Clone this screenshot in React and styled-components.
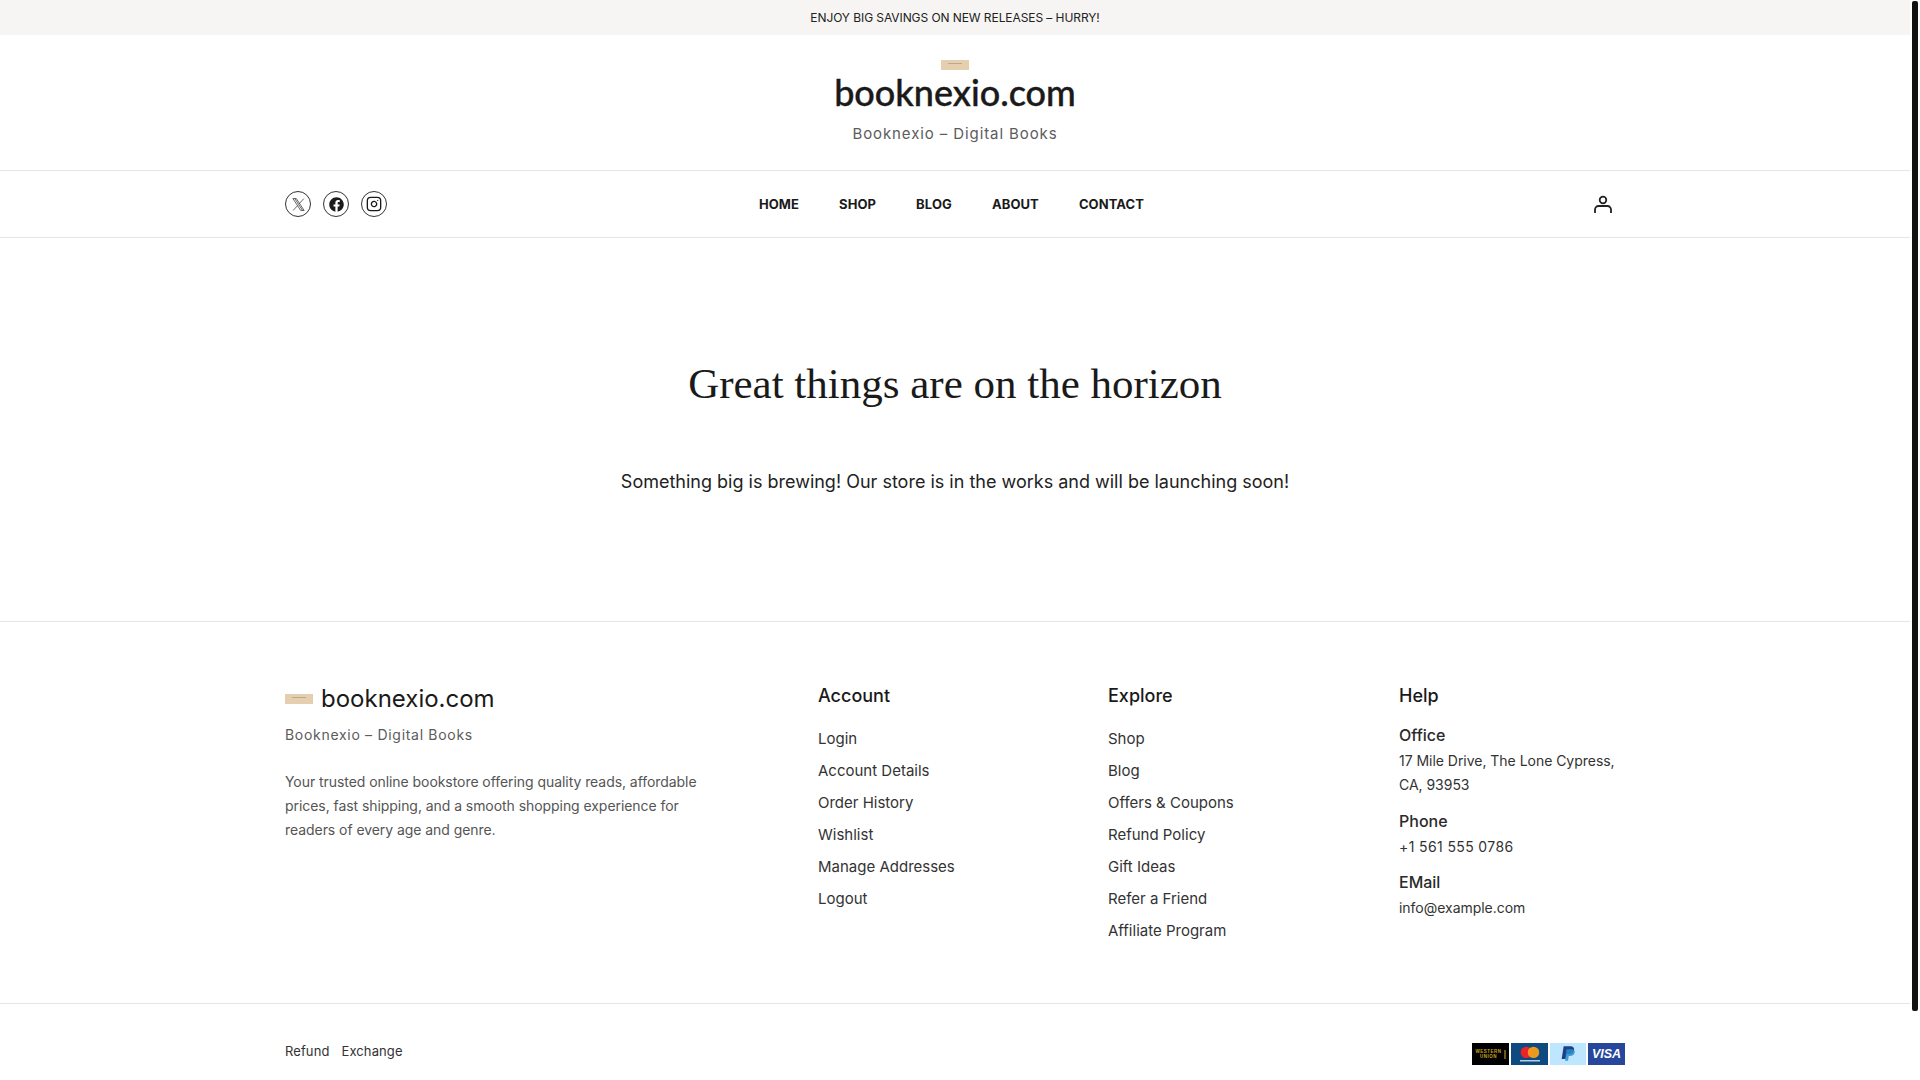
import React from 'react'
import styled, { createGlobalStyle } from 'styled-components'
import { FaFacebook } from 'react-icons/fa'
import { FiInstagram } from 'react-icons/fi'

const accountLinks = ['Login', 'Account Details', 'Order History', 'Wishlist', 'Manage Addresses', 'Logout']
const exploreLinks = ['Shop', 'Blog', 'Offers & Coupons', 'Refund Policy', 'Gift Ideas', 'Refer a Friend', 'Affiliate Program']
const navLinks = ['Home', 'Shop', 'Blog', 'About', 'Contact']

const App = () => {
    return (
        <>
            <GlobalStyle />
            <ScrollThumb />
            <Page>
                <TopBar>ENJOY BIG SAVINGS ON NEW RELEASES – HURRY!</TopBar>
                <Brand>
                    <LogoImage />
                    <BrandName>booknexio.com</BrandName>
                    <Tagline>Booknexio – Digital Books</Tagline>
                </Brand>
                <NavBar>
                    <NavInner>
                        <Socials>
                            <SocialIcon>
                                <svg width="15" height="15" viewBox="0 0 24 24" fill="none" stroke="#222" strokeWidth="1.1">
                                    <path d="M3 2.500h5.500l12.500 19h-5.500z" />
                                    <path d="M6 2.500l12.500 19" />
                                    <path d="M20.500 2.500 13.200 10.800M10.600 13.800 3.300 21.500" />
                                </svg>
                            </SocialIcon>
                            <SocialIcon><FaFacebook size={15} color="#1a1a1a" /></SocialIcon>
                            <SocialIcon><FiInstagram size={16} color="#1a1a1a" /></SocialIcon>
                        </Socials>
                        <Nav>
                            {navLinks.map(link => <NavLink key={link}>{link}</NavLink>)}
                        </Nav>
                        <UserButton>
                            <svg width="20" height="20" viewBox="0 0 20 20" fill="none" stroke="#222" strokeWidth="1.8">
                                <circle cx="10" cy="6" r="3.300" />
                                <path d="M2 19v-3.500a3.500 3.500 0 0 1 3.500-3.500h9a3.500 3.500 0 0 1 3.500 3.500V19" />
                            </svg>
                        </UserButton>
                    </NavInner>
                </NavBar>
                <Main>
                    <Heading>Great things are on the horizon</Heading>
                    <Lead>Something big is brewing! Our store is in the works and will be launching soon!</Lead>
                </Main>
                <Footer>
                    <FooterInner>
                        <About>
                            <FooterBrand>
                                <LogoImage />
                                <FooterName>booknexio.com</FooterName>
                            </FooterBrand>
                            <FooterTagline>Booknexio – Digital Books</FooterTagline>
                            <AboutText>Your trusted online bookstore offering quality reads, affordable prices, fast shipping, and a smooth shopping experience for readers of every age and genre.</AboutText>
                        </About>
                        <div>
                            <ColumnTitle>Account</ColumnTitle>
                            <LinkList>
                                {accountLinks.map(link => <FooterLink key={link}>{link}</FooterLink>)}
                            </LinkList>
                        </div>
                        <div>
                            <ColumnTitle>Explore</ColumnTitle>
                            <LinkList>
                                {exploreLinks.map(link => <FooterLink key={link}>{link}</FooterLink>)}
                            </LinkList>
                        </div>
                        <div>
                            <ColumnTitle $gap={11}>Help</ColumnTitle>
                            <HelpGroup>
                                <HelpLabel>Office</HelpLabel>
                                <HelpText>17 Mile Drive, The Lone Cypress,<br />CA, 93953</HelpText>
                            </HelpGroup>
                            <HelpGroup $gap={10}>
                                <HelpLabel>Phone</HelpLabel>
                                <PhoneText>+1 561 555 0786</PhoneText>
                            </HelpGroup>
                            <HelpGroup>
                                <HelpLabel>EMail</HelpLabel>
                                <HelpText>info@example.com</HelpText>
                            </HelpGroup>
                        </div>
                    </FooterInner>
                </Footer>
                <BottomBar>
                    <BottomInner>
                        <BottomLinks>
                            <BottomLink>Refund</BottomLink>
                            <BottomLink>Exchange</BottomLink>
                        </BottomLinks>
                        <Payments>
                            <PayCard $bg="#000">
                                <UnionText>WESTERN<br />UNION</UnionText>
                                <UnionBar />
                            </PayCard>
                            <PayCard $bg="#0d4a80">
                                <svg width="37" height="22" viewBox="0 0 37 22">
                                    <circle cx="15.400" cy="9.400" r="5.700" fill="#e8232a" />
                                    <circle cx="22.500" cy="9.400" r="5.700" fill="#f79e1b" fillOpacity="0.95" />
                                    <rect x="9" y="17" width="20" height="1.500" fill="#b9cde0" />
                                </svg>
                            </PayCard>
                            <PayCard $bg="#bfe6ff" $width={36}>
                                <svg width="36" height="22" viewBox="0 0 37 22">
                                    <path d="M14 3h7c3 0 4.200 1.800 3.600 4.200-.6 2.800-2.600 4-5.200 4h-2.400l-1 5h-4z" fill="#1f3f86" />
                                    <path d="M17 6h6c2 .4 2.800 1.800 2.300 3.600-.6 2.400-2.400 3.400-4.600 3.400h-1.400l-.8 5h-3z" fill="#2a8fcb" fillOpacity="0.85" />
                                </svg>
                            </PayCard>
                            <PayCard $bg="#26479b">
                                <VisaText>VISA</VisaText>
                            </PayCard>
                        </Payments>
                    </BottomInner>
                </BottomBar>
            </Page>
        </>
    )
}

export default App

const GlobalStyle = createGlobalStyle`
    body{
        margin:0;
        background:#fff;
        color:#1a1a1a;
        font-family:Inter, "Liberation Sans", sans-serif;
    }
`

const ScrollThumb = styled.div`
    position:fixed;
    top:1px;
    left:1912px;
    width:6px;
    height:1010px;
    background:#111;
    border-radius:2px;
`

const Page = styled.div`
    width:1910px;
`

const TopBar = styled.div`
    height:35px;
    background:#f6f5f3;
    display:flex;
    align-items:center;
    justify-content:center;
    font-size:12px;
    letter-spacing:-0.08px;
    color:#222;
`

const Brand = styled.div`
    height:135px;
    box-sizing:border-box;
    padding-top:25px;
    display:flex;
    flex-direction:column;
    align-items:center;
`

const LogoImage = styled.div`
    width:28px;
    height:10px;
    flex-shrink:0;
    background:#e6cfae;
    display:flex;
    justify-content:center;
    padding-top:3px;
    box-sizing:border-box;
    &::after{
        content:'';
        width:14px;
        height:1px;
        background:#b8a98f;
    }
`

const BrandName = styled.div`
    font-family:Lato, sans-serif;
    font-weight:500;
    font-size:36px;
    line-height:44px;
    -webkit-text-stroke:0.4px #1a1a1a;
    color:#1a1a1a;
`

const Tagline = styled.div`
    font-size:15px;
    letter-spacing:0.9px;
    line-height:22px;
    margin-top:9px;
    color:#5c5c5c;
`

const NavBar = styled.div`
    border-top:1px solid #e6e6e6;
    border-bottom:1px solid #e6e6e6;
    height:66px;
`

const NavInner = styled.div`
    width:1340px;
    height:100%;
    margin:0 auto;
    display:grid;
    grid-template-columns:1fr auto 1fr;
    align-items:center;
`

const Socials = styled.div`
    display:flex;
    gap:12px;
`

const SocialIcon = styled.div`
    width:24px;
    height:24px;
    border:1px solid #333;
    border-radius:50%;
    display:flex;
    align-items:center;
    justify-content:center;
`

const Nav = styled.nav`
    display:flex;
    gap:40px;
    padding-right:7px;
`

const NavLink = styled.a`
    font-size:13px;
    font-weight:700;
    letter-spacing:0.1px;
    text-transform:uppercase;
    color:#1a1a1a;
`

const UserButton = styled.div`
    display:flex;
    justify-content:flex-end;
    padding-right:12px;
`

const Main = styled.main`
    height:383px;
    box-sizing:border-box;
    padding-top:120px;
    text-align:center;
`

const Heading = styled.h1`
    margin:0;
    font-family:"Liberation Serif", serif;
    font-weight:400;
    font-size:43px;
    line-height:52px;
    color:#1a1a1a;
`

const Lead = styled.p`
    margin:58px 0 0;
    font-size:18px;
    line-height:28px;
    color:#222;
`

const Footer = styled.footer`
    border-top:1px solid #e6e6e6;
    height:382px;
    box-sizing:border-box;
    padding-top:59px;
`

const FooterInner = styled.div`
    width:1340px;
    margin:0 auto;
    display:grid;
    grid-template-columns:533px 290px 291px 226px;
`

const About = styled.div`
    padding-top:1px;
`

const FooterBrand = styled.div`
    display:flex;
    align-items:center;
    gap:8px;
`

const FooterName = styled.div`
    font-size:24px;
    line-height:34px;
    color:#1a1a1a;
`

const FooterTagline = styled.div`
    font-size:14px;
    letter-spacing:0.7px;
    line-height:22px;
    margin-top:8px;
    color:#5c5c5c;
`

const AboutText = styled.p`
    margin:24px 0 0;
    width:430px;
    font-size:14px;
    letter-spacing:-0.06px;
    line-height:24px;
    color:#555;
`

const ColumnTitle = styled.h4`
    margin:0 0 ${props => props.$gap || 16}px;
    font-size:18px;
    font-weight:500;
    line-height:30px;
    color:#1a1a1a;
`

const LinkList = styled.div`
    display:flex;
    flex-direction:column;
    gap:8px;
`

const FooterLink = styled.a`
    font-size:15px;
    line-height:24px;
    color:#333;
`

const HelpGroup = styled.div`
    margin-bottom:${props => props.$gap || 11}px;
`

const HelpLabel = styled.div`
    font-size:16px;
    font-weight:500;
    line-height:27px;
    color:#2a2a2a;
`

const HelpText = styled.div`
    font-size:14px;
    letter-spacing:-0.03px;
    line-height:24px;
    color:#333;
`

const PhoneText = styled(HelpText)`
    letter-spacing:0.38px;
`

const BottomBar = styled.div`
    border-top:1px solid #e6e6e6;
    height:146px;
`

const BottomInner = styled.div`
    width:1340px;
    margin:0 auto;
    padding-top:37px;
    display:flex;
    justify-content:space-between;
    align-items:flex-start;
`

const BottomLinks = styled.div`
    display:flex;
    gap:12px;
`

const BottomLink = styled.a`
    font-size:13px;
    letter-spacing:0.1px;
    line-height:20px;
    color:#333;
`

const Payments = styled.div`
    display:flex;
    gap:2px;
    margin-top:2px;
`

const PayCard = styled.div`
    width:${props => props.$width || 37}px;
    height:22px;
    background:${props => props.$bg};
    display:flex;
    align-items:center;
    justify-content:center;
    gap:2px;
`

const UnionText = styled.span`
    font-family:"Liberation Sans", sans-serif;
    font-size:4.5px;
    font-weight:700;
    line-height:5px;
    letter-spacing:0.5px;
    text-align:center;
    color:#c9a41a;
`

const UnionBar = styled.span`
    width:2px;
    height:9px;
    background:#6b5a12;
`

const VisaText = styled.span`
    font-family:"Liberation Sans", sans-serif;
    font-size:12.5px;
    font-weight:700;
    font-style:italic;
    color:#fff;
`
